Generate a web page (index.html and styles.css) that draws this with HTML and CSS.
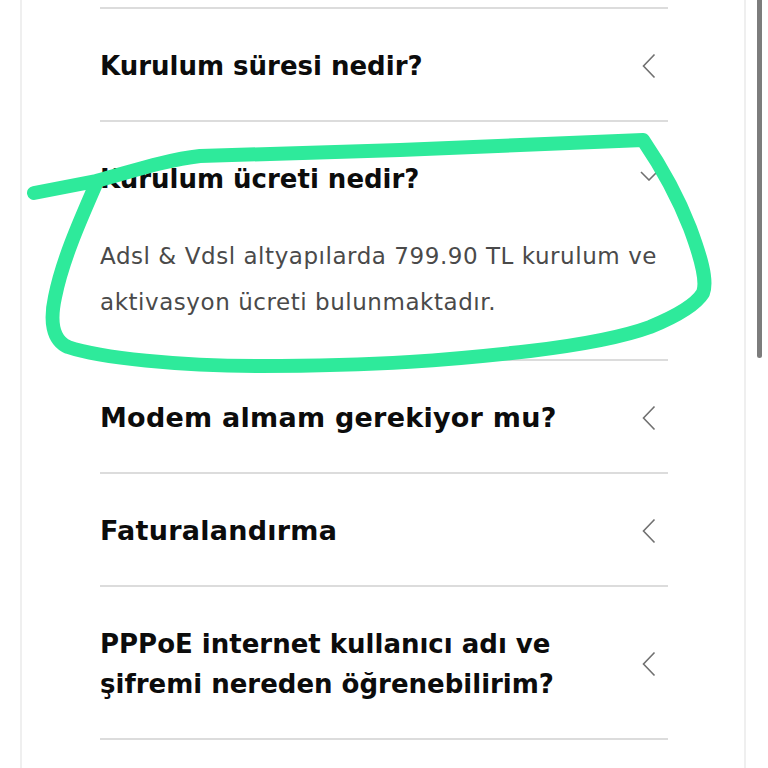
FILE: index.html
```html
<!DOCTYPE html>
<html lang="tr">
<head>
<meta charset="utf-8">
<title>SSS</title>
<link rel="stylesheet" href="styles.css">
</head>
<body>
<div class="page">
  <div class="gutter"></div>
  <main class="card">
    <ul class="faq">
      <li class="item">
        <div class="head">
          <span class="q q--compact">Kurulum süresi nedir?</span>
          <svg class="chev" width="14" height="26" viewBox="0 0 14 26"><path d="M12.5 1.5 L1.5 13 L12.5 24.5" fill="none" stroke="#707070" stroke-width="1.6"/></svg>
        </div>
      </li>
      <li class="item">
        <div class="head">
          <span class="q q--compact">Kurulum ücreti nedir?</span>
          <svg class="chev chev--down" width="18" height="10" viewBox="0 0 18 10"><path d="M1 1 L9 9 L17 1" fill="none" stroke="#707070" stroke-width="1.6"/></svg>
        </div>
        <p class="answer">Adsl &amp; Vdsl altyapılarda 799.90 TL kurulum ve aktivasyon ücreti bulunmaktadır.</p>
      </li>
      <li class="item">
        <div class="head">
          <span class="q">Modem almam gerekiyor mu?</span>
          <svg class="chev" width="14" height="26" viewBox="0 0 14 26"><path d="M12.5 1.5 L1.5 13 L12.5 24.5" fill="none" stroke="#707070" stroke-width="1.6"/></svg>
        </div>
      </li>
      <li class="item">
        <div class="head">
          <span class="q">Faturalandırma</span>
          <svg class="chev" width="14" height="26" viewBox="0 0 14 26"><path d="M12.5 1.5 L1.5 13 L12.5 24.5" fill="none" stroke="#707070" stroke-width="1.6"/></svg>
        </div>
      </li>
      <li class="item">
        <div class="head">
          <span class="q q--long">PPPoE internet kullanıcı adı ve şifremi nereden öğrenebilirim?</span>
          <svg class="chev" width="14" height="26" viewBox="0 0 14 26"><path d="M12.5 1.5 L1.5 13 L12.5 24.5" fill="none" stroke="#707070" stroke-width="1.6"/></svg>
        </div>
      </li>
    </ul>
  </main>
  <div class="track"><div class="thumb"></div></div>
  <svg class="scribble" width="768" height="768" viewBox="0 0 768 768">
    <path d="M34 193 L96 181 C130 172 165 160 200 156 L400 150 L643 140 C660 165 676 192 690 228 C700 255 708 280 703 293 C695 306 672 318 650 327 C620 338 580 345 530 351 C450 360 380 366 260 366 C180 366 100 358 68 347 C52 340 50 320 55 297 C62 262 78 225 96 184" fill="none" stroke="#2eea9b" stroke-width="14" stroke-linecap="round" stroke-linejoin="round"/>
  </svg>
</div>
</body>
</html>
```

FILE: styles.css
```css
html, body {
  margin: 0;
  padding: 0;
  background: #ffffff;
}

.page {
  position: relative;
  display: flex;
  width: 768px;
  height: 768px;
  overflow: hidden;
}

.gutter {
  flex: 0 0 20px;
}

.card {
  flex: 0 0 726px;
  box-sizing: border-box;
  border-left: 2px solid #efefef;
  border-right: 2px solid #efefef;
  padding: 7px 76px 0 78px;
  min-width: 0;
}

.faq {
  list-style: none;
  margin: 0;
  padding: 0;
  border-top: 2px solid #dcdcdc;
}

.item {
  border-bottom: 2px solid #dcdcdc;
}

.head {
  display: flex;
  align-items: center;
  justify-content: space-between;
  padding: 37px 0 34px;
  gap: 40px;
}

.q {
  font-family: "DejaVu Sans", sans-serif;
  font-weight: bold;
  font-size: 27px;
  letter-spacing: 0.25px;
  line-height: 40px;
  color: #0c0c0c;
}

.q--compact {
  font-size: 26px;
  letter-spacing: 0;
}

.q--long {
  font-size: 26px;
  letter-spacing: 0;
  line-height: 40px;
}

.chev {
  flex: 0 0 auto;
  margin-right: 12px;
}

.chev--down {
  margin-right: 10px;
  margin-top: -6px;
}

.answer {
  margin: 0;
  padding: 0 0 34px;
  font-family: "DejaVu Sans", sans-serif;
  font-size: 23px;
  letter-spacing: 0.55px;
  line-height: 46px;
  color: #4a4a4a;
}

.track {
  flex: 0 0 22px;
  padding-left: 11px;
  box-sizing: border-box;
}

.thumb {
  width: 5px;
  height: 358px;
  background: #7c7c7c;
  border-radius: 0 0 3px 3px;
}

.scribble {
  position: absolute;
  left: 0;
  top: 0;
  pointer-events: none;
}
```
